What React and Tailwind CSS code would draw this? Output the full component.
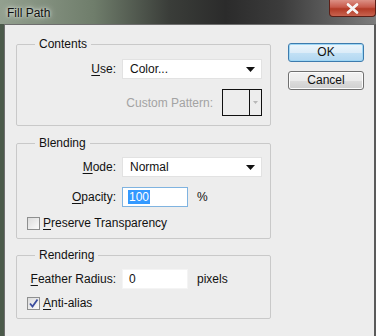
import { useState } from "react";

const font = { fontFamily: '"Liberation Sans", Arial, sans-serif' };

const Mnemonic = ({ text }) => (
  <>
    <span className="underline underline-offset-2">{text[0]}</span>
    {text.slice(1)}
  </>
);

const Arrow = ({ color = "#111" }) => (
  <svg width="9" height="5" viewBox="0 0 9 5">
    <path d="M0 0h9L4.5 5z" fill={color} />
  </svg>
);

const Checkbox = ({ checked }) => (
  <span className="flex h-[13px] w-[13px] items-center justify-center border border-[#8e8f8f] bg-gradient-to-br from-[#dcdcdc] to-[#fbfbfb]">
    {checked ? (
      <svg width="11" height="11" viewBox="0 0 11 11">
        <path d="M2 5.5l2.5 3L9.5 1.5" fill="none" stroke="#3b4d9e" strokeWidth="1.8" />
      </svg>
    ) : null}
  </span>
);

function Group({ title, className = "", children }) {
  return (
    <fieldset className={`rounded-[2px] border border-[#c9c9c9] px-0 ${className}`}>
      <legend className="ml-[18px] px-[4px] text-[12px] leading-[14px] text-[#111]">{title}</legend>
      {children}
    </fieldset>
  );
}

function Row({ label, children, className = "" }) {
  return (
    <div className={`flex h-[20px] items-center leading-[14px] ${className}`}>
      <span className="w-[99px] text-right text-[12px] text-[#111]">{label}</span>
      <div className="ml-[6px] flex items-center">{children}</div>
    </div>
  );
}

export default function App() {
  const [preserve, setPreserve] = useState(false);
  const [antiAlias, setAntiAlias] = useState(true);

  return (
    <div className="flex h-[336px] w-[376px] flex-col overflow-hidden" style={font}>
      <div className="flex h-[24px] shrink-0 items-start justify-between bg-[linear-gradient(90deg,#93a08f_0%,#6f7d6b_25%,#3a3d39_45%,#2b2b2b_60%,#3c3c3c_75%,#7d7d7d_100%)]">
        <span className="pl-[7px] pt-[4px] text-[12px] text-[#101010] [text-shadow:0_0_6px_#e8ece6,0_0_3px_#e8ece6]">Fill Path</span>
        <button
          type="button"
          className="flex h-[17px] w-[47px] items-center justify-center rounded-b-[4px] border border-t-0 border-[#5c1f17] bg-[linear-gradient(180deg,#dc9085_0%,#c7594a_45%,#b23a26_55%,#c8634f_100%)]"
        >
          <svg width="13" height="11" viewBox="0 0 13 11">
            <path d="M2 1.5l9 8M11 1.5l-9 8" stroke="#fff" strokeWidth="2.6" strokeLinecap="round" />
            <path d="M2 1.5l9 8M11 1.5l-9 8" stroke="#f4f4f4" strokeWidth="1.6" strokeLinecap="round" />
          </svg>
        </button>
      </div>

      <div className="flex flex-1">
        <div className="w-[4px] bg-[#4b5a4a]" />
        <div className="flex flex-1 border-l border-t border-r-2 border-[#6e6e6e] border-r-[#5a5a5a] bg-[#ededed] pl-[11px] pt-[12px]">
          <div className="flex w-[255px] flex-col">
            <Group title="Contents" className="pb-[9px]">
              <Row label={<><Mnemonic text="Use" />:</>} className="mt-[8px]">
                <div className="flex h-[20px] w-[140px] items-center justify-between border border-[#e2e2e2] bg-white pl-[7px] pr-[6px] text-[12px] text-[#111]">
                  <span>Color...</span>
                  <Arrow />
                </div>
              </Row>
              <div className="mt-[10px] flex h-[27px] items-center justify-end pr-[8px] leading-[14px]">
                <span className="text-[12px] text-[#a3a3a3]">Custom Pattern:</span>
                <div className="ml-[9px] flex h-[27px] w-[40px] border border-[#111] bg-[#ededed]">
                  <div className="w-[27px] border-r border-[#111]" />
                  <div className="flex flex-1 items-center justify-center">
                    <svg width="5" height="3" viewBox="0 0 5 3">
                      <path d="M0 0h5L2.5 3z" fill="#b8b8b8" />
                    </svg>
                  </div>
                </div>
              </div>
            </Group>

            <Group title="Blending" className="mt-[10px] pb-[8px]">
              <Row label={<><Mnemonic text="Mode" />:</>} className="mt-[7px]">
                <div className="flex h-[20px] w-[140px] items-center justify-between border border-[#e2e2e2] bg-white pl-[7px] pr-[6px] text-[12px] text-[#111]">
                  <span>Normal</span>
                  <Arrow />
                </div>
              </Row>
              <Row label={<><Mnemonic text="Opacity" />:</>} className="mt-[10px]">
                <div className="flex h-[20px] w-[66px] items-center border border-[#7fb3e0] bg-white pl-[5px]">
                  <span className="bg-[#3399ff] px-[1px] text-[12px] leading-[14px] text-white">100</span>
                </div>
                <span className="ml-[9px] text-[12px] text-[#111]">%</span>
              </Row>
              <label className="ml-[10px] mt-[10px] flex h-[13px] items-center gap-[3px] text-[12px] leading-[13px] text-[#111]" onClick={() => setPreserve((v) => !v)}>
                <Checkbox checked={preserve} />
                <span>
                  <Mnemonic text="Preserve" /> Transparency
                </span>
              </label>
            </Group>

            <Group title="Rendering" className="mt-[9px] pb-[8px]">
              <Row label={<><Mnemonic text="Feather Radius" />:</>} className="mt-[7px]">
                <div className="flex h-[20px] w-[66px] items-center border border-[#f4f4f4] bg-white pl-[6px] text-[12px] text-[#111]">0</div>
                <span className="ml-[9px] text-[12px] text-[#111]">pixels</span>
              </Row>
              <label className="ml-[10px] mt-[8px] flex h-[13px] items-center gap-[3px] text-[12px] leading-[13px] text-[#111]" onClick={() => setAntiAlias((v) => !v)}>
                <Checkbox checked={antiAlias} />
                <span>
                  <Mnemonic text="Anti-alias" />
                </span>
              </label>
            </Group>
          </div>

          <div className="ml-[17px] flex w-[76px] flex-col pt-[6px]">
            <button
              type="button"
              className="h-[19px] rounded-[3px] border border-[#3d7bad] bg-[linear-gradient(180deg,#ecf6fc_0%,#dcecf8_50%,#c3e1f5_51%,#b2d7f1_100%)] text-[12px] leading-[17px] text-[#111] shadow-[inset_0_0_0_1px_#9ed6f4]"
            >
              OK
            </button>
            <button
              type="button"
              className="mt-[9px] h-[19px] rounded-[3px] border border-[#707070] bg-[linear-gradient(180deg,#f2f2f2_0%,#ebebeb_50%,#dddddd_51%,#cfcfcf_100%)] text-[12px] leading-[17px] text-[#111] shadow-[inset_0_0_0_1px_#fcfcfc]"
            >
              Cancel
            </button>
          </div>
        </div>
      </div>
    </div>
  );
}
